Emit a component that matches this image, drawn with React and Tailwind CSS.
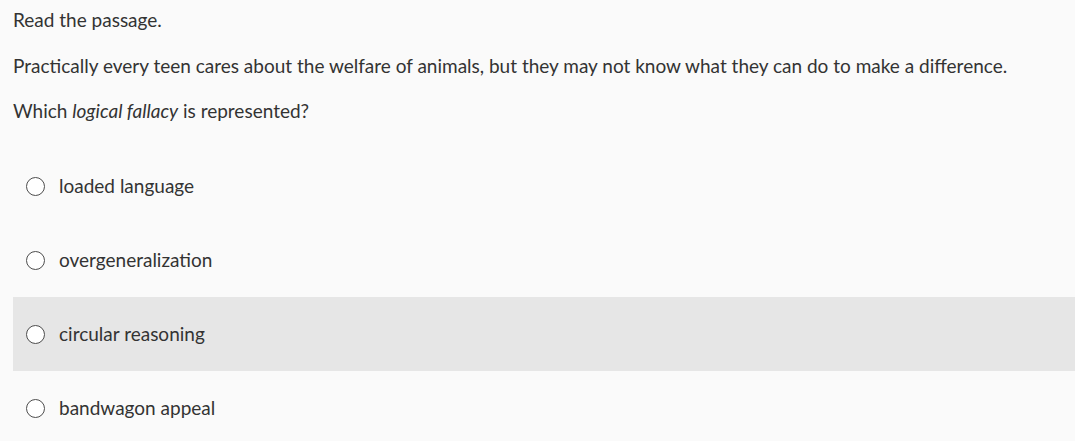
import React, { useState } from "react";

const options = [
  "loaded language",
  "overgeneralization",
  "circular reasoning",
  "bandwagon appeal",
];

export default function App() {
  const [hovered] = useState(2);

  return (
    <div
      className="min-h-[441px] bg-[#fafafa] pl-[13px] pt-[8px] text-[19px] leading-[24px] text-[#333333]"
      style={{ fontFamily: "Lato, 'Open Sans', sans-serif" }}
    >
      <p>Read the passage.</p>
      <p className="mt-[22px]">
        Practically every teen cares about the welfare of animals, but they may not know what they can do to make a difference.
      </p>
      <p className="mt-[21px]">
        Which <em>logical fallacy</em> is represented?
      </p>

      {/* Answer choices */}
      <div className="mt-[26px] flex flex-col">
        {options.map((opt, i) => (
          <div
            key={opt}
            className={`flex h-[74px] items-center pl-[13px] ${i === hovered ? "bg-[#e6e6e6]" : ""}`}
          >
            <span className="h-[19px] w-[19px] rounded-full border-[1.5px] border-[#4d4d4d] bg-white" />
            <span className="ml-[14px]">{opt}</span>
          </div>
        ))}
      </div>
    </div>
  );
}
